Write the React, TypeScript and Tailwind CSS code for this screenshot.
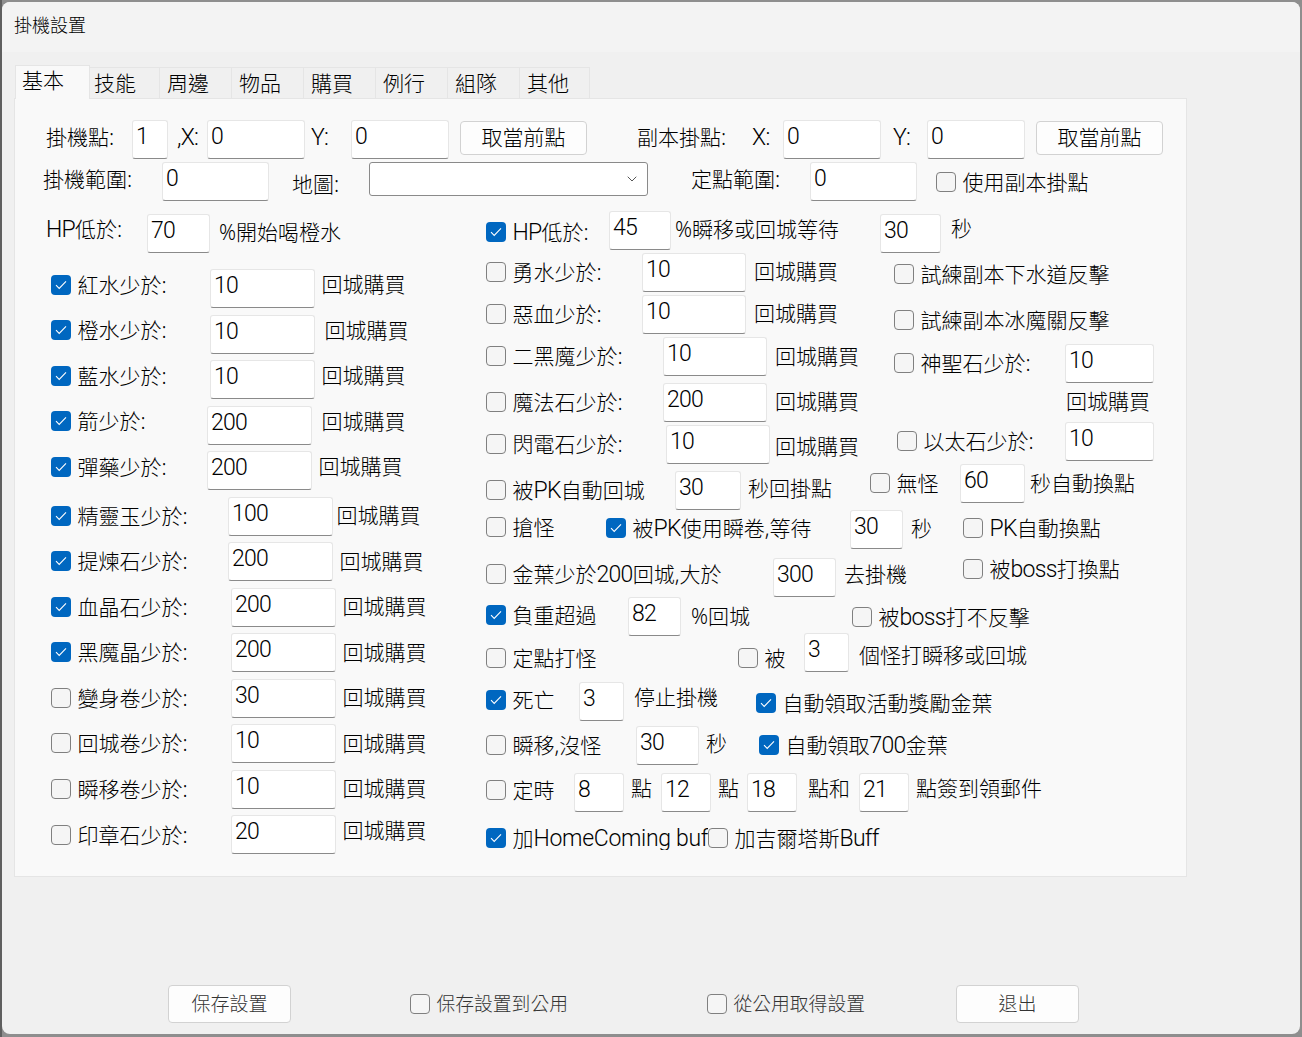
import React from "react";
import { ChevronDown } from "lucide-react";

type P = { c?: string; children?: React.ReactNode };

function L({ children }: P) {
  return <span className="font-['Roboto',sans-serif] text-[23px] font-light tracking-[-0.7px] leading-none">{children}</span>;
}

function Lw({ children }: P) {
  return <span className="font-['Roboto',sans-serif] text-[23px] font-light tracking-[-0.3px] leading-none">{children}</span>;
}

function T({ c = "", children }: P) {
  return <div className={`shrink-0 whitespace-nowrap leading-[22px] ${c}`}>{children}</div>;
}

function In({ c = "", v = "" }: { c?: string; v?: string }) {
  return (
    <div className={`h-[39px] shrink-0 box-border bg-white border border-[#e6e6e6] border-b-[#8a8a8a] rounded-[3px] pl-[3px] pt-[3px] leading-6 ${c}`}>
      <L>{v}</L>
    </div>
  );
}

function Box({ on }: { on?: boolean }) {
  return on ? (
    <span className="flex w-5 h-5 shrink-0 items-center justify-center rounded-[4px] bg-[#0067c0]">
      <svg width="12" height="10" viewBox="0 0 12 10" fill="none">
        <path d="M1 5.2 L4.2 8.4 L11 1.4" stroke="#ffffff" strokeWidth="1.1" />
      </svg>
    </span>
  ) : (
    <span className="block w-5 h-5 shrink-0 box-border rounded-[4px] border border-[#808080] bg-[#f5f5f5]" />
  );
}

function Ck({ c = "", on, children }: { c?: string; on?: boolean; children?: React.ReactNode }) {
  return (
    <div className={`flex h-6 shrink-0 items-center gap-[6.5px] whitespace-nowrap ${c}`}>
      <Box on={on} />
      <span className="leading-6">{children}</span>
    </div>
  );
}

function Btn({ c = "", children }: P) {
  return (
    <div className={`flex shrink-0 box-border items-center justify-center bg-[#fdfdfd] border border-[#d2d2d2] rounded-[4px] ${c}`}>
      {children}
    </div>
  );
}

function Row({ c = "", children }: P) {
  return <div className={`flex items-start ${c}`}>{children}</div>;
}

const tabs = [
  { t: "技能", c: "w-[70px] pl-[4px]" },
  { t: "周邊", c: "w-[72px] pl-[7px]" },
  { t: "物品", c: "w-[72px] pl-[7px]" },
  { t: "購買", c: "w-[72px] pl-[7px]" },
  { t: "例行", c: "w-[72px] pl-[7px]" },
  { t: "組隊", c: "w-[72px] pl-[7px]" },
  { t: "其他", c: "w-[70px] pl-[7px]" },
];

const leftRows = [
  { on: true, h: "h-[46px]", m: "mt-[4px]", w: "w-[159px]", l: "紅水少於:", v: "10", a: "ml-[7px] mt-[4px]" },
  { on: true, h: "h-[45px]", m: "mt-[3px]", w: "w-[159px]", l: "橙水少於:", v: "10", a: "ml-[10px] mt-[4px]" },
  { on: true, h: "h-[46px]", m: "mt-[4px]", w: "w-[159px]", l: "藍水少於:", v: "10", a: "ml-[7px] mt-[4px]" },
  { on: true, h: "h-[45px]", m: "mt-[3px]", w: "w-[156px]", l: "箭少於:", v: "200", a: "ml-[10px] mt-[4px]" },
  { on: true, h: "h-[46px]", m: "mt-[4px]", w: "w-[156px]", l: "彈藥少於:", v: "200", a: "ml-[7px] mt-[4px]" },
  { on: true, h: "h-[45px]", m: "mt-[7px]", w: "w-[177px]", l: "精靈玉少於:", v: "100", a: "ml-[4px] mt-[7px]" },
  { on: true, h: "h-[46px]", m: "mt-[7px]", w: "w-[177px]", l: "提煉石少於:", v: "200", a: "ml-[7px] mt-[8px]" },
  { on: true, h: "h-[45px]", m: "mt-[7px]", w: "w-[180px]", l: "血晶石少於:", v: "200", a: "ml-[7px] mt-[7px]" },
  { on: true, h: "h-[46px]", m: "mt-[7px]", w: "w-[180px]", l: "黑魔晶少於:", v: "200", a: "ml-[7px] mt-[8px]" },
  { on: false, h: "h-[45px]", m: "mt-[7px]", w: "w-[180px]", l: "變身卷少於:", v: "30", a: "ml-[7px] mt-[7px]" },
  { on: false, h: "h-[46px]", m: "mt-[7px]", w: "w-[180px]", l: "回城卷少於:", v: "10", a: "ml-[7px] mt-[8px]" },
  { on: false, h: "h-[45px]", m: "mt-[7px]", w: "w-[180px]", l: "瞬移卷少於:", v: "10", a: "ml-[7px] mt-[7px]" },
  { on: false, h: "h-[46px]", m: "mt-[8px]", w: "w-[180px]", l: "印章石少於:", v: "20", a: "ml-[7px] mt-[4px]" },
];

export default function App() {
  return (
    <div className="w-[1302px] h-[1037px] box-border overflow-hidden bg-[#8e8e8e] border-l-2 border-[#5f5f5f] pt-[2px] pr-[2px] pb-[3px] text-[21px] font-light text-black font-['Noto_Sans','Noto_Sans_CJK_TC',sans-serif]">
      <div className="flex flex-col h-full overflow-hidden rounded-[8px] bg-[#f0f0f0]">
        {/* title bar */}
        <div className="h-[50px] shrink-0 bg-[#f3f3f3] pl-[12px] pt-[11px] text-[18px] leading-6">掛機設置</div>

        {/* tabs */}
        <div className="flex h-[46px] shrink-0 items-end pl-[13px]">
          <div className="relative z-10 w-[75px] h-[34px] box-border bg-[#f9f9f9] border border-b-0 border-[#e5e5e5] pl-[6px] pt-[2px] leading-6 -mb-[1px]">基本</div>
          {tabs.map((t) => (
            <div key={t.t} className={`h-[31px] box-border bg-[#f0f0f0] border-r border-t border-[#e5e5e5] pt-[3px] leading-6 ${t.c}`}>
              {t.t}
            </div>
          ))}
        </div>

        {/* panel */}
        <div className="ml-[12px] w-[1173px] h-[779px] shrink-0 box-border bg-[#f9f9f9] border border-[#e5e5e5] pt-[21px]">
          <Row c="h-[42px] pl-[31px]">
            <T c="w-[86px] mt-[6px]">掛機點:</T>
            <In c="w-[36px]" v="1" />
            <T c="w-[30px] ml-[9px] mt-[6px]"><L>,X:</L></T>
            <In c="w-[98px]" v="0" />
            <T c="w-[40px] ml-[6px] mt-[6px]"><L>Y:</L></T>
            <In c="w-[98px]" v="0" />
            <Btn c="w-[127px] h-[34px] ml-[11px] mt-[1px]">取當前點</Btn>
            <T c="w-[115px] ml-[50px] mt-[6px]">副本掛點:</T>
            <T c="w-[31px] mt-[6px]"><L>X:</L></T>
            <In c="w-[98px]" v="0" />
            <T c="w-[34px] ml-[12px] mt-[6px]"><L>Y:</L></T>
            <In c="w-[98px]" v="0" />
            <Btn c="w-[127px] h-[34px] ml-[11px] mt-[1px]">取當前點</Btn>
          </Row>
          <Row c="h-[49px] pl-[28px]">
            <T c="w-[119px] mt-[6px]">掛機範圍:</T>
            <In c="w-[107px]" v="0" />
            <T c="w-[77px] ml-[23px] mt-[11px]">地圖:</T>
            <div className="flex w-[279px] h-[34px] shrink-0 box-border items-center justify-end bg-white border border-[#8a8a8a] rounded-[3px] pr-[7px]">
              <ChevronDown size={16} strokeWidth={1} />
            </div>
            <T c="w-[119px] ml-[43px] mt-[6px]">定點範圍:</T>
            <In c="w-[107px]" v="0" />
            <Ck c="ml-[19px] mt-[8px]">使用副本掛點</Ck>
          </Row>

          <div className="flex">
            {/* left column */}
            <div className="w-[471px] shrink-0 pt-[3px]">
              <Row c="h-[55px] pl-[31px]">
                <T c="w-[101px] mt-[4px]"><L>HP</L>低於:</T>
                <In c="w-[63px]" v="70" />
                <T c="ml-[9px] mt-[7px]">%開始喝橙水</T>
              </Row>
              {leftRows.map((r) => (
                <Row key={r.l} c={`${r.h} pl-[36px]`}>
                  <div className={`${r.w} shrink-0`}>
                    <Ck c={r.m} on={r.on}>{r.l}</Ck>
                  </div>
                  <In c="w-[104.5px]" v={r.v} />
                  <T c={r.a}>回城購買</T>
                </Row>
              ))}
            </div>

            {/* right column */}
            <div className="grow">
              <Row c="h-[42px]">
                <div className="w-[123px] shrink-0"><Ck c="mt-[9px]" on><L>HP</L>低於:</Ck></div>
                <In c="w-[62px]" v="45" />
                <T c="w-[205px] ml-[4px] mt-[7px]">%瞬移或回城等待</T>
                <In c="w-[61px] mt-[3px]" v="30" />
                <T c="ml-[10px] mt-[6px]">秒</T>
              </Row>
              <Row c="h-[42px]">
                <div className="w-[156px] shrink-0"><Ck c="mt-[7px]">勇水少於:</Ck></div>
                <In c="w-[104px]" v="10" />
                <T c="w-[140px] ml-[8px] mt-[7px]">回城購買</T>
                <Ck c="mt-[9px]">試練副本下水道反擊</Ck>
              </Row>
              <Row c="h-[42px]">
                <div className="w-[156px] shrink-0"><Ck c="mt-[7px]">惡血少於:</Ck></div>
                <In c="w-[104px]" v="10" />
                <T c="w-[140px] ml-[8px] mt-[7px]">回城購買</T>
                <Ck c="mt-[13px]">試練副本冰魔關反擊</Ck>
              </Row>
              <Row c="h-[46px]">
                <div className="w-[177px] shrink-0"><Ck c="mt-[7px]">二黑魔少於:</Ck></div>
                <In c="w-[104px]" v="10" />
                <T c="w-[119px] ml-[8px] mt-[8px]">回城購買</T>
                <div className="w-[171px] shrink-0"><Ck c="mt-[14px]">神聖石少於:</Ck></div>
                <In c="w-[89px] mt-[7px]" v="10" />
              </Row>
              <Row c="h-[42px]">
                <div className="w-[177px] shrink-0"><Ck c="mt-[7px]">魔法石少於:</Ck></div>
                <In c="w-[104px]" v="200" />
                <T c="w-[291px] ml-[8px] mt-[7px]">回城購買</T>
                <T c="mt-[7px]">回城購買</T>
              </Row>
              <Row c="h-[39px]">
                <div className="w-[180px] shrink-0"><Ck c="mt-[7px]">閃電石少於:</Ck></div>
                <In c="w-[104px]" v="10" />
                <T c="w-[122px] ml-[5px] mt-[10px]">回城購買</T>
                <div className="w-[168px] shrink-0"><Ck c="mt-[4px]">以太石少於:</Ck></div>
                <In c="w-[89px] -mt-[3px]" v="10" />
              </Row>
              <Row c="h-[46px]">
                <div className="w-[189px] shrink-0"><Ck c="mt-[14px]">被<L>PK</L>自動回城</Ck></div>
                <In c="w-[66px] mt-[7px]" v="30" />
                <T c="w-[122px] ml-[7px] mt-[13px]">秒回掛點</T>
                <div className="w-[90px] shrink-0"><Ck c="mt-[7px]">無怪</Ck></div>
                <In c="w-[65px]" v="60" />
                <T c="ml-[5px] mt-[8px]">秒自動換點</T>
              </Row>
              <Row c="h-[48px]">
                <div className="w-[120px] shrink-0"><Ck c="mt-[5px]">搶怪</Ck></div>
                <div className="w-[244px] shrink-0"><Ck c="mt-[6px]" on>被<L>PK</L>使用瞬卷,等待</Ck></div>
                <In c="w-[53px]" v="30" />
                <T c="w-[52px] ml-[8px] mt-[7px]">秒</T>
                <Ck c="mt-[6px]"><L>PK</L>自動換點</Ck>
              </Row>
              <Row c="h-[39px]">
                <div className="w-[287px] shrink-0"><Ck c="mt-[4px]">金葉少於<L>200</L>回城,大於</Ck></div>
                <In c="w-[63px]" v="300" />
                <T c="w-[119px] ml-[8px] mt-[5px]">去掛機</T>
                <Ck c="-mt-[1px]">被<L>boss</L>打換點</Ck>
              </Row>
              <Row c="h-[36px]">
                <div className="w-[142px] shrink-0"><Ck c="mt-[6px]" on>負重超過</Ck></div>
                <In c="w-[53px]" v="82" />
                <T c="w-[161px] ml-[10px] mt-[8px]">%回城</T>
                <Ck c="mt-[8px]">被<L>boss</L>打不反擊</Ck>
              </Row>
              <Row c="h-[49px]">
                <div className="w-[252px] shrink-0"><Ck c="mt-[13px]">定點打怪</Ck></div>
                <div className="w-[66px] shrink-0"><Ck c="mt-[13px]">被</Ck></div>
                <In c="w-[45px]" v="3" />
                <T c="ml-[10px] mt-[11px]">個怪打瞬移或回城</T>
              </Row>
              <Row c="h-[44px]">
                <div className="w-[93px] shrink-0"><Ck c="mt-[6px]" on>死亡</Ck></div>
                <In c="w-[45px]" v="3" />
                <T c="w-[122px] ml-[10px] mt-[4px]">停止掛機</T>
                <Ck c="mt-[9px]" on>自動領取活動獎勵金葉</Ck>
              </Row>
              <Row c="h-[47px]">
                <div className="w-[150px] shrink-0"><Ck c="mt-[7px]">瞬移,沒怪</Ck></div>
                <In c="w-[63px]" v="30" />
                <T c="w-[53px] ml-[7px] mt-[6px]">秒</T>
                <Ck c="mt-[7px]" on>自動領取<L>700</L>金葉</Ck>
              </Row>
              <Row c="h-[50px]">
                <div className="w-[88px] shrink-0"><Ck c="mt-[5px]">定時</Ck></div>
                <In c="w-[50px]" v="8" />
                <T c="w-[30px] ml-[7px] mt-[4px]">點</T>
                <In c="w-[50px]" v="12" />
                <T c="w-[29px] ml-[7px] mt-[4px]">點</T>
                <In c="w-[50px]" v="18" />
                <T c="w-[51px] ml-[11px] mt-[4px]">點和</T>
                <In c="w-[50px]" v="21" />
                <T c="ml-[7px] mt-[4px]">點簽到領郵件</T>
              </Row>
              <Row c="mt-[3px] h-6">
                <div className="w-[222px] shrink-0 overflow-hidden"><Ck on>加<Lw>HomeComing buff</Lw></Ck></div>
                <Ck>加吉爾塔斯<L>Buff</L></Ck>
              </Row>
            </div>
          </div>
        </div>

        {/* bottom bar */}
        <div className="flex mt-[108px] items-center pl-[166px] text-[#333333]">
          <Btn c="w-[123px] h-[38px] text-[19px]">保存設置</Btn>
          <div className="w-[297px] ml-[119px] shrink-0"><Ck c="gap-[5.5px] text-[18.8px]">保存設置到公用</Ck></div>
          <div className="w-[249px] shrink-0"><Ck c="gap-[5.5px] text-[18.8px]">從公用取得設置</Ck></div>
          <Btn c="w-[123px] h-[38px] text-[19px]">退出</Btn>
        </div>
      </div>
    </div>
  );
}
